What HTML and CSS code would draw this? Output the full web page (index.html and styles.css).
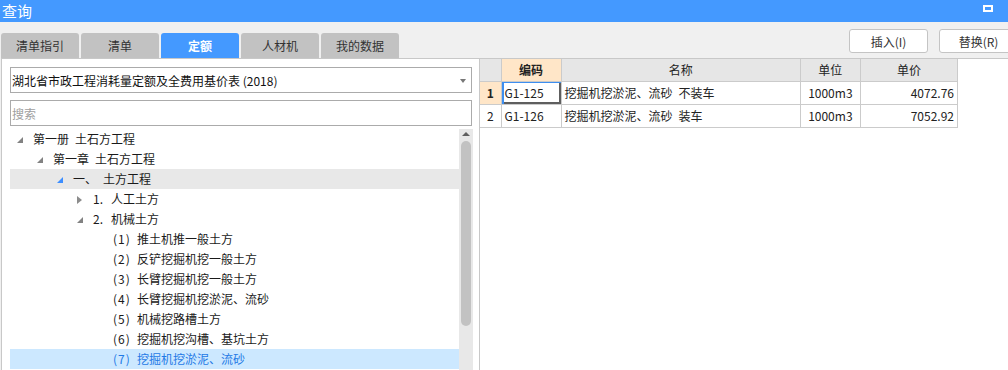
FILE: index.html
```html
<!DOCTYPE html>
<html lang="zh-CN">
<head>
    <meta charset="UTF-8">
    <title>查询</title>
    <link rel="stylesheet" href="styles.css">
</head>
<body>
    <div class="window">
        <div class="titlebar">
            <span class="title">查询</span>
            <span class="max-btn"></span>
        </div>
        <div class="toolbar">
            <ul class="tabs">
                <li>清单指引</li>
                <li>清单</li>
                <li class="active">定额</li>
                <li>人材机</li>
                <li>我的数据</li>
            </ul>
            <div class="actions">
                <button>插入(I)</button>
                <button>替换(R)</button>
            </div>
        </div>
        <div class="content">
            <div class="left-pane">
                <div class="select">
                    <span>湖北省市政工程消耗量定额及全费用基价表 (2018)</span>
                    <span class="caret"></span>
                </div>
                <div class="search">
                    <input type="text" placeholder="搜索">
                </div>
                <div class="tree-wrap">
                    <ul class="tree">
                        <li class="lv0"><span class="toggle"><i class="open"></i></span>第一册&ensp;土石方工程</li>
                        <li class="lv1"><span class="toggle"><i class="open"></i></span>第一章&ensp;土石方工程</li>
                        <li class="lv2 current"><span class="toggle"><i class="open blue"></i></span><span class="num wide">一、</span>土方工程</li>
                        <li class="lv3"><span class="toggle"><i class="closed"></i></span><span class="num">1.</span>人工土方</li>
                        <li class="lv3"><span class="toggle"><i class="open"></i></span><span class="num">2.</span>机械土方</li>
                        <li class="lv4"><span class="num paren">(1)</span>推土机推一般土方</li>
                        <li class="lv4"><span class="num paren">(2)</span>反铲挖掘机挖一般土方</li>
                        <li class="lv4"><span class="num paren">(3)</span>长臂挖掘机挖一般土方</li>
                        <li class="lv4"><span class="num paren">(4)</span>长臂挖掘机挖淤泥、流砂</li>
                        <li class="lv4"><span class="num paren">(5)</span>机械挖路槽土方</li>
                        <li class="lv4"><span class="num paren">(6)</span>挖掘机挖沟槽、基坑土方</li>
                        <li class="lv4 selected"><span class="num paren">(7)</span>挖掘机挖淤泥、流砂</li>
                    </ul>
                    <div class="scrollbar">
                        <span class="arrow-up"></span>
                        <span class="thumb"></span>
                    </div>
                </div>
            </div>
            <div class="right-pane">
                <table class="quota-table">
                    <colgroup>
                        <col class="c-no">
                        <col class="c-code">
                        <col class="c-name">
                        <col class="c-unit">
                        <col class="c-price">
                    </colgroup>
                    <thead>
                        <tr>
                            <th></th>
                            <th class="sorted">编码</th>
                            <th>名称</th>
                            <th>单位</th>
                            <th>单价</th>
                        </tr>
                    </thead>
                    <tbody>
                        <tr class="active-row">
                            <td class="no">1</td>
                            <td class="code focus">G1-125</td>
                            <td class="name">挖掘机挖淤泥、流砂&ensp;不装车</td>
                            <td class="unit">1000m3</td>
                            <td class="price">4072.76</td>
                        </tr>
                        <tr>
                            <td class="no">2</td>
                            <td class="code">G1-126</td>
                            <td class="name">挖掘机挖淤泥、流砂&ensp;装车</td>
                            <td class="unit">1000m3</td>
                            <td class="price">7052.92</td>
                        </tr>
                    </tbody>
                </table>
            </div>
        </div>
    </div>
</body>
</html>
```

FILE: styles.css
```css
html, body {
    margin: 0;
    padding: 0;
    height: 100%;
    overflow: hidden;
}

body {
    font-family: "Noto Sans CJK SC", "Liberation Sans", sans-serif;
    font-size: 12px;
    color: #222;
    background-color: #f0f0f0;
}

.window {
    display: flex;
    flex-direction: column;
    height: 370px;
}

/* title bar */
.titlebar {
    height: 22px;
    background-color: #4499ff;
    display: flex;
    align-items: center;
    justify-content: space-between;
    padding: 0 15px 0 2px;
}

.title {
    color: #fff;
    font-size: 15px;
    line-height: 22px;
}

.max-btn {
    width: 6px;
    height: 3px;
    border: 2px solid #fff;
    margin-top: -6px;
}

/* tabs + buttons */
.toolbar {
    height: 36px;
    display: flex;
    justify-content: space-between;
    padding-left: 1px;
    margin-right: -10px;
}

.tabs {
    list-style: none;
    margin: 0;
    padding: 11px 0 0 0;
    display: flex;
    gap: 2px;
}

.tabs li {
    width: 78px;
    height: 25px;
    line-height: 25px;
    text-align: center;
    background-color: #c2c2c2;
    color: #333;
    border-radius: 3px 3px 0 0;
}

.tabs li.active {
    background-color: #4499ff;
    color: #fff;
    font-weight: bold;
}

.actions {
    display: flex;
    gap: 11px;
    padding-top: 7px;
}

.actions button {
    width: 79px;
    height: 24px;
    background-color: #fff;
    border: 1px solid #c4c4c4;
    border-radius: 3px;
    font-family: inherit;
    font-size: 12px;
    color: #333;
    padding: 0;
}

/* content */
.content {
    flex: 1;
    display: flex;
    min-height: 0;
    padding-left: 1px;
}

.left-pane {
    width: 479px;
    background-color: #fff;
    border: 1px solid #c8c8c8;
    border-bottom: none;
    padding: 8px 7px 0 8px;
    box-sizing: border-box;
    display: flex;
    flex-direction: column;
}

.select,
.search {
    height: 26px;
    border: 1px solid #ababab;
    box-sizing: border-box;
    display: flex;
    align-items: center;
    justify-content: space-between;
}

.select span:first-child {
    padding-left: 1px;
    color: #111;
}

.caret {
    width: 0;
    height: 0;
    border-left: 3px solid transparent;
    border-right: 3px solid transparent;
    border-top: 4px solid #777;
    margin-right: 5px;
    margin-top: 1px;
}

.search {
    margin-top: 7px;
}

.search input {
    border: none;
    outline: none;
    width: 100%;
    height: 22px;
    padding: 0 0 0 1px;
    font-family: inherit;
    font-size: 12px;
}

.search input::placeholder {
    color: #a0a0a0;
}

.tree-wrap {
    flex: 1;
    display: flex;
    margin-top: 3px;
    margin-right: -1px;
    min-height: 0;
    overflow: hidden;
}

.tree {
    list-style: none;
    margin: 0;
    padding: 0;
    flex: 1;
}

.tree li {
    height: 20px;
    line-height: 20px;
    display: flex;
    align-items: center;
    white-space: nowrap;
    color: #1a1a1a;
}

.tree li.lv1 { padding-left: 20px; }
.tree li.lv2 { padding-left: 40px; }
.tree li.lv3 { padding-left: 60px; }
.tree li.lv4 { padding-left: 103px; }

.tree li.current {
    background-color: #e8e8e8;
}

.tree li.selected {
    background-color: #cce8ff;
    color: #1f7ae6;
}

.toggle {
    width: 23px;
    height: 20px;
    display: flex;
    align-items: center;
    padding-left: 7px;
    box-sizing: border-box;
}

.toggle .open {
    width: 0;
    height: 0;
    border-left: 6px solid transparent;
    border-bottom: 6px solid #828282;
    margin-top: 2px;
}

.toggle .open.blue {
    border-bottom-color: #3d8eff;
}

.toggle .closed {
    width: 0;
    height: 0;
    border-left: 5px solid #8c8c8c;
    border-top: 4px solid transparent;
    border-bottom: 4px solid transparent;
    margin-top: 1px;
}

.num {
    width: 18px;
}

.num.wide {
    width: 30px;
}

.num.paren {
    width: 24px;
    letter-spacing: 1px;
}

.scrollbar {
    width: 14px;
    background-color: #e8e8e8;
    display: flex;
    flex-direction: column;
    align-items: center;
}

.arrow-up {
    width: 0;
    height: 0;
    border-left: 4px solid transparent;
    border-right: 4px solid transparent;
    border-bottom: 4px solid #606060;
    margin-top: 3px;
}

.thumb {
    width: 10px;
    height: 185px;
    background-color: #c2c2c2;
    border-radius: 5px;
    margin-top: 5px;
}

/* right table */
.right-pane {
    flex: 1;
    background-color: #fff;
    border-top: 1px solid #c8c8c8;
}

.quota-table {
    border-collapse: collapse;
    table-layout: fixed;
    width: 478px;
}

.c-no { width: 21px; }
.c-code { width: 60px; }
.c-name { width: 239px; }
.c-unit { width: 60px; }
.c-price { width: 97px; }

.quota-table th,
.quota-table td {
    height: 22px;
    padding: 0 3px;
    border: 1px solid #cbcbcb;
    white-space: nowrap;
    overflow: hidden;
    font-size: 12px;
    line-height: 22px;
}

.quota-table tr:first-child th {
    border-top: none;
}

.quota-table th:first-child,
.quota-table td:first-child {
    border-left: none;
}

.quota-table th {
    background-color: #e6e6e6;
    font-weight: normal;
    color: #222;
    text-align: center;
}

.quota-table th.sorted {
    background-color: #ffe6c8;
    font-weight: bold;
}

.quota-table td.no {
    text-align: center;
    padding: 0;
}

.active-row td.no {
    background-color: #ffe6c8;
    font-weight: bold;
}

.quota-table td.focus {
    box-shadow: inset 2px 0 0 #3d8ef0, inset 0 1px 0 #3d8ef0, inset -2px 0 0 #5e5e5e, inset 0 -2px 0 #5e5e5e;
}

.quota-table td.unit {
    text-align: center;
}

.quota-table td.price {
    text-align: right;
}
```
